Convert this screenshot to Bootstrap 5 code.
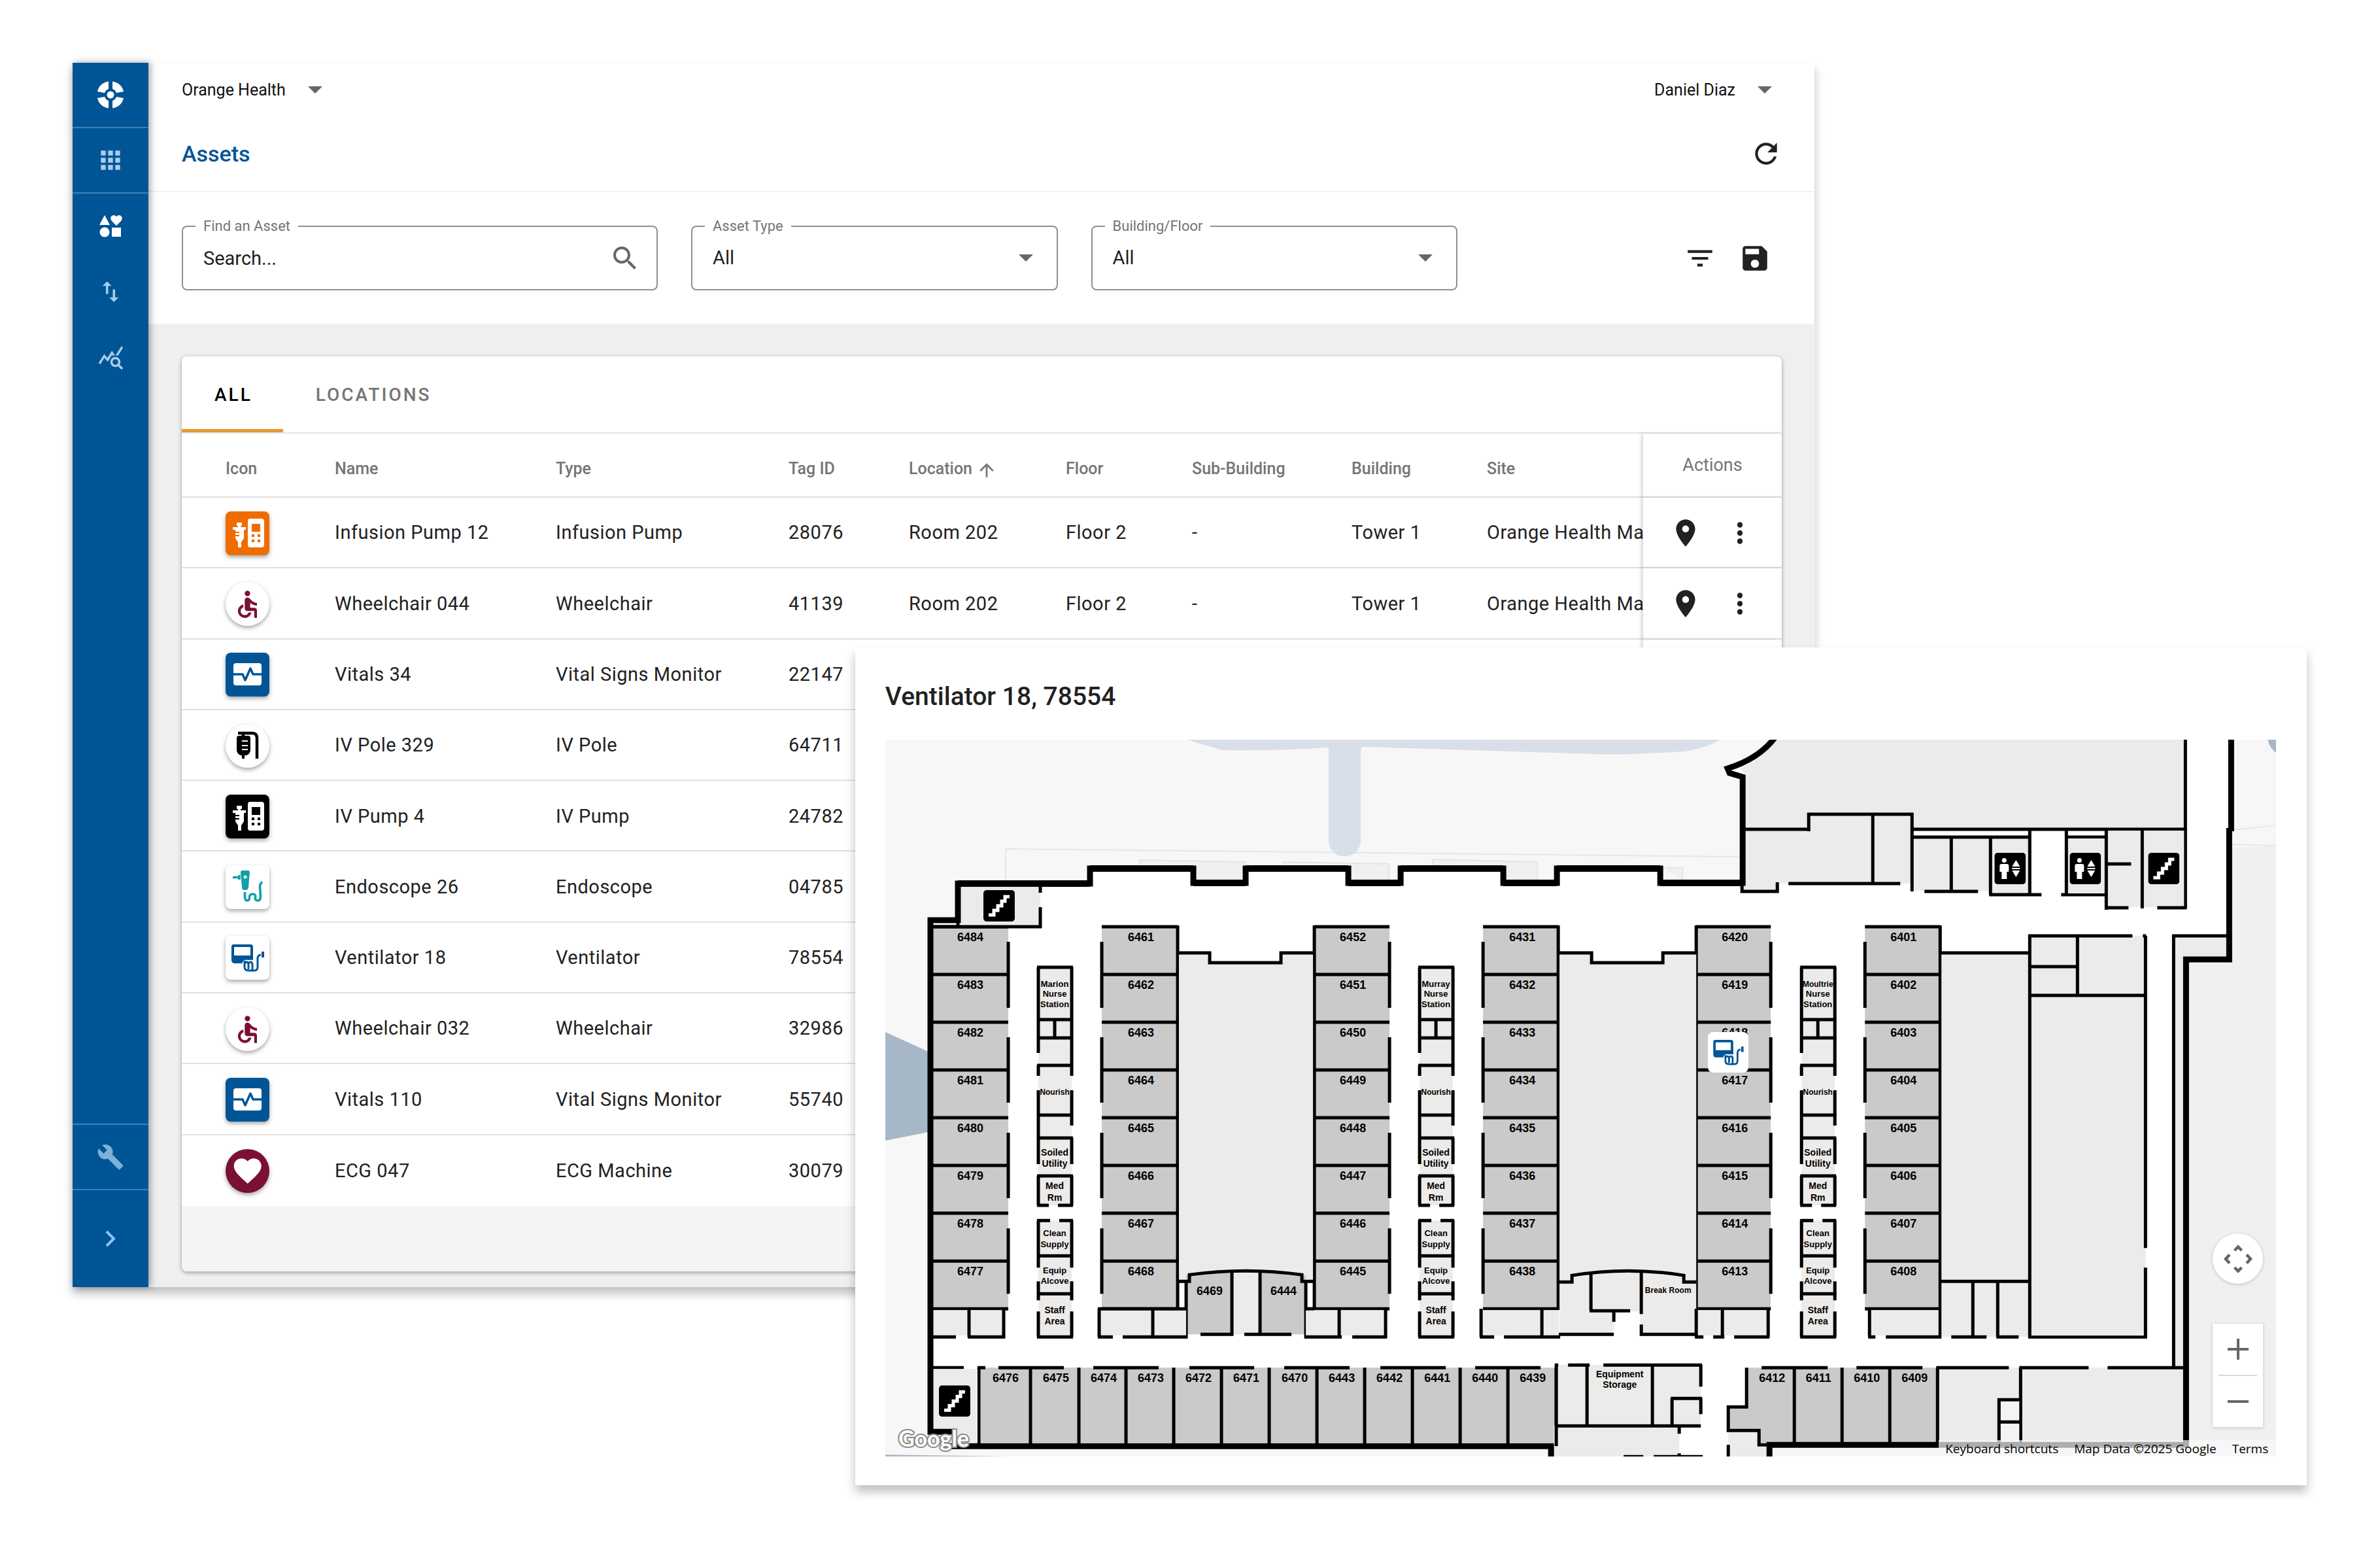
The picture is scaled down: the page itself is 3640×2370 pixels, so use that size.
<!DOCTYPE html>
<html lang="en">
<head>
<meta charset="utf-8">
<meta name="viewport" content="width=device-width, initial-scale=1">
<title>Assets - Orange Health</title>
<link rel="stylesheet" href="https://cdn.jsdelivr.net/npm/bootstrap@5.3.0/dist/css/bootstrap.min.css">
<style>
:root { --brand: #005596; --ink: #212121; --muted: #757575; }
body { font-family: Roboto, "Open Sans", sans-serif; color: var(--ink); background: #fff; }
.stage { min-height: 2370px; padding: 96px 0 0 111px; }
.app-shell { width: 73.19vw; box-shadow: 0 10px 14px rgba(0,0,0,.25); }
.side-rail { width: 116px; background: var(--brand); box-shadow: 3px 0 10px rgba(0,0,0,.35); z-index: 2; }
.rail-link { height: 100px; color: #a9cdea; }
.rail-link.current { color: #fff; }
.rail-link.rail-end { height: 148px; }
.rail-rule { border-bottom: 2px solid #3f81b4; }
.rail-tool { color: #7fb0d8; }
.top-row { height: 82px; padding: 0 66px 0 51px; }
.top-row button, .icon-btn { border: 0; background: none; padding: 0; color: var(--ink); line-height: 1; }
.top-row button { font-size: 25px; color: #111; gap: 34px; }
.title-row { height: 116px; padding: 0 50px 0 51px; border-bottom: 2px solid #f1f1f1; }
.page-title { font-size: 34px; font-weight: 500; color: var(--brand); line-height: 1; }
.filter-row { height: 201px; padding: 0 67px 0 51px; gap: 51px; }
.filter-tools { gap: 34px; }
.outlined { height: 99px; border: 2px solid #8f8f8f; border-radius: 8px; }
.outlined.wide { width: 20vw; }
.outlined.mid { width: 15.4vw; }
.outlined label { position: absolute; top: -13px; left: 19px; padding: 0 12px; background: #fff; font-size: 22px; line-height: 24px; color: var(--muted); }
.outlined input, .outlined select { width: 100%; height: 100%; border: 0; outline: 0; background: transparent; padding: 0 31px; font-size: 29px; color: var(--ink); appearance: none; }
.outlined input::placeholder { color: var(--ink); opacity: 1; }
.outlined svg { position: absolute; top: 0; bottom: 0; margin: auto 0; right: 36px; pointer-events: none; }
.outlined.wide svg { right: 24px; }
.work-area { background: #efefef; padding: 50px 51px 24px; }
.asset-panel { background: #fff; border-radius: 8px; box-shadow: 0 2px 6px rgba(0,0,0,.35); }
.tab-strip { height: 118px; border-bottom: 2px solid #e4e4e4; }
.tab-strip button { border: 0; background: none; padding: 2px 47px 0 50px; font-size: 28px; font-weight: 500; letter-spacing: 3px; color: var(--muted); border-bottom: 5px solid transparent; border-top: 5px solid transparent; }
.tab-strip button.on { color: #000; border-bottom-color: #e9982d; }
.asset-grid { width: 100%; height: 1181px; table-layout: fixed; border-collapse: separate; border-spacing: 0; }
.asset-grid th { height: 98px; padding: 12px 0 0; font-size: 25px; font-weight: 500; color: var(--muted); white-space: nowrap; border-bottom: 2px solid #e0e0e0; }
.asset-grid td { height: 108px; padding: 2px 0 0; font-size: 29px; letter-spacing: .5px; white-space: nowrap; overflow: hidden; border-bottom: 2px solid #e0e0e0; }
.asset-grid tr:last-child td { border-bottom: 0; }
.asset-grid tr > :first-child { padding-left: 67px; }
.asset-grid tr > .act { position: relative; background: #fff; box-shadow: -3px 0 5px rgba(0,0,0,.16); overflow: visible; }
.asset-grid th.act { font-size: 27px; font-weight: 400; text-align: center; padding: 0; }
.act-pair { gap: 33px; }
.tile { width: 67px; height: 67px; border-radius: 8px; box-shadow: 0 3px 6px rgba(0,0,0,.35); display: block; }
.tile.round { border-radius: 50%; }
.panel-foot { height: 100px; background: #f4f4f4; border-radius: 0 0 8px 8px; }
.map-window { position: absolute; top: 990px; left: 35.93vw; width: 61vw; padding: 51px 47px 44px 46px; background: #fff; box-shadow: 0 10px 14px rgba(0,0,0,.25); z-index: 5; }
.map-title { font-size: 39px; line-height: 48px; font-weight: 500; margin: 0 0 42px; }
.plan { display: block; width: 100%; height: auto; font-family: "Liberation Sans", Arial, sans-serif; font-weight: 700; }
.plan .t18 { font-size: 18px; } .plan .t14 { font-size: 14px; } .plan .t13 { font-size: 13px; } .plan .t12 { font-size: 12px; }
.map-tools { position: absolute; right: 20px; bottom: 45px; width: 77px; gap: 61px; }
.map-tools button { border: 0; background: #fff; width: 77px; padding: 0; color: #666; }
.pan-btn { height: 77px; border-radius: 50%; box-shadow: 0 1px 5px rgba(0,0,0,.2); }
.zoom-box { background: #fff; box-shadow: 0 1px 5px rgba(0,0,0,.2); }
.zoom-box button { height: 78px; }
.zoom-box hr { margin: 0 9px; border: 0; border-top: 2px solid #d9d9d9; opacity: 1; height: 0; }
.map-legal { position: absolute; right: 0; bottom: 0; background: rgba(247,247,247,.7); height: 25px; padding: 1px 12px 0 10px; gap: 24px; font-family: "Open Sans", sans-serif; font-size: 19px; line-height: 25px; }
.map-legal a, .map-legal span { color: #000; text-decoration: none; }
.pin { position: absolute; left: 59.15%; top: 40.75%; width: 62px; height: 62px; border: 0; border-radius: 8px; background: #fff; padding: 0; }
</style>
<script src="https://cdn.jsdelivr.net/npm/bootstrap@5.3.0/dist/js/bootstrap.bundle.min.js"></script>
</head>
<body>
<svg width="0" height="0" class="position-absolute" aria-hidden="true">
  <defs>
    <symbol id="i-pump" viewBox="0 0 67 67"><g fill="#fff"><path d="M17 17h8v5h-2v2h8v4h-3v13l-4 6v8h-5v-8l-4-6v-3h6v-2h-6v-3h6v-2h-6v-3h-4v-4h8v-2h-2z"/><path fill-rule="evenodd" d="M37 11h18q4 0 4 4v36q0 4-4 4H37q-3 0-3-4V15q0-4 3-4zM40 19v12h13V19zM40 35v4h4v-4zM49 35v4h4v-4zM40 43v4h4v-4zM49 43v4h4v-4z"/></g></symbol>
    <symbol id="i-chair" viewBox="0 0 67 67"><g transform="translate(8.500 9) scale(2.08)" fill="#7a1033"><circle cx="12" cy="4" r="2"/><path d="M19 13v-2c-1.540.02-3.090-.75-4.070-1.830l-1.290-1.430c-.17-.19-.38-.34-.61-.45-.01 0-.01-.01-.02-.01H13c-.35-.2-.75-.3-1.190-.26C10.760 7.110 10 8.040 10 9.090V15c0 1.100.9 2 2 2h5v5h2v-5.500c0-1.100-.9-2-2-2h-3v-3.450c1.290 1.070 3.250 1.940 5 1.950zm-6.170 5c-.41 1.160-1.520 2-2.830 2-1.660 0-3-1.340-3-3 0-1.310.84-2.410 2-2.830V12.100c-2.280.46-4 2.480-4 4.900 0 2.760 2.240 5 5 5 2.420 0 4.440-1.720 4.900-4h-2.070z"/></g></symbol>
    <symbol id="i-vitals" viewBox="0 0 67 67"><rect x="12" y="16" width="43" height="34" rx="4" fill="#fff"/><path d="M12 33h14l4 9 8-18 4 9h13" fill="none" stroke="#005596" stroke-width="3.500" stroke-linejoin="round"/></symbol>
    <symbol id="i-pole" viewBox="0 0 67 67"><path d="M19 14h22q7 0 7 8v31M27 14v6" fill="none" stroke="#000" stroke-width="4.500"/><path d="M20 18h15q3 0 3 4v18q0 5-6 8h-3v5h-4v-5h-2q-6-3-6-8V22q0-4 3-4z"/><path d="M25 26h9M25 33h9M25 39h9" stroke="#fff" stroke-width="2"/></symbol>
    <symbol id="i-scope" viewBox="0 0 67 67"><path fill="#149fa8" fill-rule="evenodd" d="M26 8h8q3 0 3 3l-2 22q0 5-5 5h-2q-3 0-3-5l-2-22q0-3 3-3zM30 15.500a2.500 2.500 0 1 0 .1 0z"/><path d="M11 18.500h10M21 15v7M29.500 41v7q0 6 4 6 3 0 3-5t5-5 4 5 4 5q4 0 4-7l-1-14q0-6 4-7" fill="none" stroke="#149fa8" stroke-width="3.600"/></symbol>
    <symbol id="i-vent" viewBox="0 0 67 67"><path fill="#005596" fill-rule="evenodd" d="M12 13h26q4 0 4 4v25H13q-4-1-4-5V17q0-4 3-4zM13 17v13h25V17z"/><path d="M29 52V43q0-3 3-3t3 3v8M35 43q0-3 3-3t3 3v9" fill="none" stroke="#fff" stroke-width="7"/><path d="M29 38v9q0 6 6 6h9q5 0 5-6V35q0-6 5-6M29 43q1-3 3-3 3 0 3 4v7M35 43q1-3 3-3 3 0 3 4v9" fill="none" stroke="#005596" stroke-width="3"/><path d="M57 24v9" stroke="#005596" stroke-width="4"/></symbol>
    <symbol id="i-heart" viewBox="0 0 67 67"><path transform="translate(8.500 8) scale(2.100)" fill="#fff" d="M12 21.350l-1.450-1.320C5.400 15.360 2 12.280 2 8.500 2 5.420 4.420 3 7.500 3c1.740 0 3.410.81 4.500 2.090C13.090 3.810 14.760 3 16.500 3 19.580 3 22 5.420 22 8.500c0 3.780-3.400 6.860-8.550 11.540L12 21.350z"/></symbol>
    <symbol id="i-place" viewBox="0 0 24 24"><path d="M12 2C8.130 2 5 5.130 5 9c0 5.250 7 13 7 13s7-7.750 7-13c0-3.870-3.130-7-7-7zm0 9.500c-1.380 0-2.500-1.120-2.500-2.500s1.120-2.500 2.500-2.500 2.500 1.120 2.500 2.500-1.120 2.500-2.500 2.500z"/></symbol>
    <symbol id="i-more" viewBox="0 0 24 24"><circle cx="12" cy="6" r="2"/><circle cx="12" cy="12" r="2"/><circle cx="12" cy="18" r="2"/></symbol>
    <symbol id="i-caret" viewBox="0 0 22 11"><path d="M0 0h22L11 11z" fill="#666"/></symbol>
    <symbol id="i-stairs" viewBox="0 0 48 48"><rect width="48" height="48" rx="5"/><path d="M8 38h8v-7h6v-7h6v-7h5v-7h7" fill="none" stroke="#fff" stroke-width="5"/></symbol>
    <symbol id="i-lift" viewBox="0 0 48 48"><rect width="48" height="48" rx="5"/><g fill="#fff"><circle cx="15" cy="11.500" r="3.500"/><path d="M11 17h8q3 0 3 3v9h-3v11h-8V29H8v-9q0-3 3-3zM27 21l6-10 6 10zM27 27l6 10 6-10z"/><path d="M27 23h12v2H27z"/></g></symbol>
  </defs>
</svg>

<div class="stage position-relative overflow-hidden">
  <div class="app-shell d-flex bg-white">
    <nav class="side-rail d-flex flex-column flex-shrink-0 position-relative" aria-label="Main">
      <a href="#" class="rail-link current rail-rule d-flex align-items-center justify-content-center" aria-label="Home">
        <svg width="42" height="42" viewBox="0 0 42 42" fill="#fff"><circle cx="21" cy="21" r="5.500"/><path d="M18 0.500v11.500q-4 1-6 6L1 16Q4 3 18 .5zM24 .5v11.500q4 1 6 6l11-2Q38 3 24 .5zM18 41.500V30q-4-1-6-6L1 26q3 13 17 15.500zM24 41.500V30q4-1 6-6l11 2q-3 13-17 15.500z"/></svg>
      </a>
      <a href="#" class="rail-link rail-rule d-flex align-items-center justify-content-center" aria-label="Apps">
        <svg width="44" height="44" viewBox="0 0 24 24" fill="currentColor"><path d="M4 8h4V4H4v4zm6 12h4v-4h-4v4zm-6 0h4v-4H4v4zm0-6h4v-4H4v4zm6 0h4v-4h-4v4zm6-10v4h4V4h-4zm-6 4h4V4h-4v4zm6 6h4v-4h-4v4zm0 6h4v-4h-4v4z"/></svg>
      </a>
      <a href="#" class="rail-link current d-flex align-items-center justify-content-center" aria-label="Assets">
        <svg width="36" height="36" viewBox="0 0 36 36" fill="#fff"><path d="M9 1l8 15H1zM27 17l-7-7q-3-4-1-7 4-4 8 0 4-4 8 0 2 3-1 7z"/><circle cx="9" cy="27" r="7.500"/><path d="M20 20h14v14H20z"/></svg>
      </a>
      <a href="#" class="rail-link d-flex align-items-center justify-content-center" aria-label="Transfers">
        <svg width="42" height="42" viewBox="0 0 24 24" fill="currentColor"><path d="M16 17.010V10h-2v7.010h-3L15 21l4-3.990h-3zM9 3L5 6.990h3V14h2V6.990h3L9 3z"/></svg>
      </a>
      <a href="#" class="rail-link d-flex align-items-center justify-content-center" aria-label="Reports">
        <svg width="41" height="41" viewBox="0 0 24 24" fill="currentColor"><path d="M19.880 18.470c.44-.7.700-1.510.700-2.390 0-2.490-2.010-4.500-4.500-4.500s-4.500 2.010-4.500 4.500 2.010 4.500 4.490 4.500c.88 0 1.700-.26 2.390-.7L21.580 23 23 21.580l-3.120-3.110zm-3.800.11c-1.380 0-2.500-1.120-2.500-2.500s1.120-2.500 2.500-2.500 2.500 1.120 2.500 2.500-1.120 2.500-2.500 2.500zM15.720 10.080c-.74.02-1.450.18-2.100.45l-.55-.83-3.800 6.180-3.010-3.520-3.630 5.810L1 17l5-8 3 3.500L13 6l2.720 4.080zm2.590.5c-.64-.28-1.330-.45-2.050-.49L21.380 2 23 3.180l-4.690 7.400z"/></svg>
      </a>
      <span class="flex-grow-1 rail-rule"></span>
      <a href="#" class="rail-link rail-tool rail-rule d-flex align-items-center justify-content-center" aria-label="Settings">
        <svg width="42" height="42" viewBox="0 0 24 24" fill="currentColor"><path d="M22.700 19l-9.100-9.100c.9-2.300.4-5-1.500-6.900-2-2-5-2.400-7.400-1.300L9 6 6 9 1.600 4.700C.4 7.100.9 10.100 2.900 12.100c1.900 1.900 4.600 2.400 6.900 1.500l9.100 9.100c.4.400 1 .4 1.400 0l2.300-2.300c.5-.4.500-1.100.1-1.400z"/></svg>
      </a>
      <a href="#" class="rail-link rail-end d-flex align-items-center justify-content-center" aria-label="Expand">
        <svg width="16" height="26" viewBox="0 0 16 26" fill="none" stroke="#8cc4f5" stroke-width="4"><path d="M2 2l11 11L2 24"/></svg>
      </a>
    </nav>

    <main class="flex-grow-1">
      <header>
        <div class="top-row d-flex align-items-center justify-content-between">
          <button type="button" class="d-flex align-items-center">Orange Health <svg width="22" height="11"><use href="#i-caret"/></svg></button>
          <button type="button" class="d-flex align-items-center">Daniel Diaz <svg width="22" height="11"><use href="#i-caret"/></svg></button>
        </div>
        <div class="title-row d-flex align-items-center justify-content-between">
          <h1 class="page-title m-0">Assets</h1>
          <button type="button" class="icon-btn" aria-label="Refresh"><svg width="50" height="50" viewBox="0 0 24 24" fill="currentColor"><path d="M17.650 6.350C16.200 4.900 14.210 4 12 4c-4.420 0-7.990 3.580-7.990 8s3.570 8 7.990 8c3.730 0 6.840-2.550 7.730-6h-2.080c-.82 2.330-3.040 4-5.650 4-3.310 0-6-2.690-6-6s2.690-6 6-6c1.660 0 3.140.69 4.220 1.780L13 11h7V4l-2.350 2.350z"/></svg></button>
        </div>
      </header>

      <form class="filter-row d-flex align-items-center">
        <div class="outlined wide position-relative">
          <label for="find">Find an Asset</label>
          <input id="find" type="text" placeholder="Search...">
          <svg width="48" height="48" viewBox="0 0 24 24" fill="#666"><path d="M15.500 14h-.79l-.28-.27C15.410 12.590 16 11.110 16 9.500 16 5.910 13.090 3 9.500 3S3 5.910 3 9.500 5.910 16 9.500 16c1.610 0 3.090-.59 4.230-1.570l.27.28v.79l5 4.990L20.490 19l-4.990-5zm-6 0C7.010 14 5 11.990 5 9.500S7.010 5 9.500 5 14 7.010 14 9.500 11.990 14 9.500 14z"/></svg>
        </div>
        <div class="outlined mid position-relative">
          <label for="kind">Asset Type</label>
          <select id="kind"><option>All</option></select>
          <svg width="22" height="11"><use href="#i-caret"/></svg>
        </div>
        <div class="outlined mid position-relative">
          <label for="place">Building/Floor</label>
          <select id="place"><option>All</option></select>
          <svg width="22" height="11"><use href="#i-caret"/></svg>
        </div>
        <div class="filter-tools d-flex ms-auto">
          <button type="button" class="icon-btn" aria-label="Filter"><svg width="50" height="50" viewBox="0 0 24 24" fill="currentColor"><path d="M10 18h4v-2h-4v2zM3 6v2h18V6H3zm3 7h12v-2H6v2z"/></svg></button>
          <button type="button" class="icon-btn" aria-label="Save"><svg width="50" height="50" viewBox="0 0 24 24" fill="currentColor"><path d="M17 3H5c-1.110 0-2 .9-2 2v14c0 1.100.89 2 2 2h14c1.100 0 2-.9 2-2V7l-4-4zm-5 16c-1.660 0-3-1.340-3-3s1.340-3 3-3 3 1.340 3 3-1.340 3-3 3zm3-10H5V5h10v4z"/></svg></button>
        </div>
      </form>

      <div class="work-area">
        <section class="asset-panel">
          <div class="tab-strip d-flex" role="tablist">
            <button type="button" class="on" role="tab" aria-selected="true">ALL</button>
            <button type="button" role="tab" aria-selected="false">LOCATIONS</button>
          </div>
          <table class="asset-grid">
            <colgroup><col width="234"><col width="338"><col width="356"><col width="184"><col width="240"><col width="193"><col width="244"><col width="207"><col width="239"><col width="212"></colgroup>
            <thead><tr><th>Icon</th><th>Name</th><th>Type</th><th>Tag ID</th><th>Location <svg width="32" height="32" viewBox="0 0 24 24" fill="currentColor"><path d="M4 12l1.410 1.410L11 7.830V20h2V7.830l5.580 5.590L20 12l-8-8-8 8z"/></svg></th><th>Floor</th><th>Sub-Building</th><th>Building</th><th>Site</th><th class="act">Actions</th></tr></thead>
            <tbody id="assets"></tbody>
          </table>
          <div class="panel-foot"></div>
        </section>
      </div>
    </main>
  </div>

  <section class="map-window">
    <h2 class="map-title">Ventilator 18, 78554</h2>
    <div class="position-relative">
      <svg class="plan" id="plan" viewBox="1354 1131 2127 1096" role="img" aria-label="Floor plan"></svg>
      <button type="button" class="pin" aria-label="Ventilator 18"><svg width="62" height="62" viewBox="0 0 67 67" class="d-block"><use href="#i-vent"/></svg></button>
      <div class="map-tools d-flex flex-column">
        <button type="button" class="pan-btn" aria-label="Pan"><svg width="46" height="46" viewBox="0 0 46 46" fill="none" stroke="currentColor" stroke-width="4.500"><path d="M17.500 10l5.500-5.500 5.500 5.500M17.500 36l5.500 5.500 5.500-5.500M10 16.500L4 23l6 6.500M36 16.500l6 6.500-6 6.500"/></svg></button>
        <div class="zoom-box">
          <button type="button" aria-label="Zoom in"><svg width="32" height="32" stroke="currentColor" stroke-width="4"><path d="M0 16h32M16 0v32"/></svg></button>
          <hr>
          <button type="button" aria-label="Zoom out"><svg width="32" height="32" stroke="currentColor" stroke-width="4"><path d="M0 16h32"/></svg></button>
        </div>
      </div>
      <div class="map-legal d-flex"><a href="#">Keyboard shortcuts</a><span>Map Data ©2025 Google</span><a href="#">Terms</a></div>
    </div>
  </section>
</div>

<script>
/* asset rows */
const tiles = {
  pump: ['i-pump', '#ef6c00', ''], chair: ['i-chair', '#fff', 'round'], vitals: ['i-vitals', '#005596', ''],
  pole: ['i-pole', '#fff', 'round'], ivpump: ['i-pump', '#000', ''], scope: ['i-scope', '#fff', ''],
  vent: ['i-vent', '#fff', ''], ecg: ['i-heart', '#7a1033', 'round']
};
const rows = [
  ['pump', 'Infusion Pump 12', 'Infusion Pump', '28076', 'Room 202', 'Floor 2', '-', 'Tower 1', 'Orange Health Ma'],
  ['chair', 'Wheelchair 044', 'Wheelchair', '41139', 'Room 202', 'Floor 2', '-', 'Tower 1', 'Orange Health Ma'],
  ['vitals', 'Vitals 34', 'Vital Signs Monitor', '22147'],
  ['pole', 'IV Pole 329', 'IV Pole', '64711'],
  ['ivpump', 'IV Pump 4', 'IV Pump', '24782'],
  ['scope', 'Endoscope 26', 'Endoscope', '04785'],
  ['vent', 'Ventilator 18', 'Ventilator', '78554'],
  ['chair', 'Wheelchair 032', 'Wheelchair', '32986'],
  ['vitals', 'Vitals 110', 'Vital Signs Monitor', '55740'],
  ['ecg', 'ECG 047', 'ECG Machine', '30079']
];
const actions = '<div class="act-pair d-flex justify-content-center">' +
  '<button type="button" class="icon-btn" aria-label="Locate"><svg width="50" height="50" fill="currentColor"><use href="#i-place"/></svg></button>' +
  '<button type="button" class="icon-btn" aria-label="More"><svg width="50" height="50" fill="currentColor"><use href="#i-more"/></svg></button></div>';
document.getElementById('assets').innerHTML = rows.map(r => {
  const [id, bg, cls] = tiles[r[0]];
  const full = r.length > 4;
  return `<tr><td><svg class="tile ${cls}" style="background:${bg}"><use href="#${id}"/></svg></td>` +
    r.slice(1).map(c => `<td>${c}</td>`).join('') + (full ? '' : '<td colspan="5"></td>') +
    `<td class="act">${full ? actions : ''}</td></tr>`;
}).join('');

/* floor plan */
const out = [];
const B = '#ecebe9', G = '#cacaca';
const rect = (x1, y1, x2, y2, f) => out.push(`<rect x="${x1}" y="${y1}" width="${x2 - x1}" height="${y2 - y1}" fill="${f}"/>`);
const path = (d, w, f, s) => out.push(`<path d="${d}" fill="${f || 'none'}" stroke="${s || (w ? '#000' : 'none')}" stroke-width="${w || 0}"/>`);
const text = (x, y, s, c, extra) => out.push(`<text x="${x}" y="${y}" class="${c}" text-anchor="middle" ${extra || ''}>${s}</text>`);
const T = 5;
const H = (y, ...p) => { let d = ''; for (let i = 0; i < p.length; i += 2) d += `M${p[i]} ${y}H${p[i + 1]}`; path(d, T); };
const V = (x, ...p) => { let d = ''; for (let i = 0; i < p.length; i += 2) d += `M${x} ${p[i]}V${p[i + 1]}`; path(d, T); };

/* ground */
rect(1354, 1131, 3481, 2227, '#f7f7f7');
path('M3347 1300L3481 1293V2227H3347z', 0, '#f0f0f0');
path('M3414 1269L3481 1262M3414 1291L3481 1293', 2, null, '#e8e8e8');
rect(3347, 2201, 3481, 2227, '#f7f7f7');
path('M1743 1346V1315L1903 1318V1346M1964 1346V1318L2124 1321V1346M2191 1346V1314L2351 1318V1346M2544 1327H2573V1346', 2, '#f0f0f0', '#e4e4e4');
path('M1538 1346V1298L2659 1310', 2, null, '#e6e6e6');
path('M1815 1131L1869 1147Q1965 1148 2029 1143Q2032 1143 2032 1148V1284C2032 1318 2081 1318 2081 1284V1148Q2081 1142 2086 1142L2440 1153Q2480 1155 2576 1149Q2610 1144 2630 1131z', 0, '#d9dfe9');
path('M1354 1578L1420 1608V1731L1354 1744z', 0, '#a6b7c8');
path('M1354 2224L1550 2227H1354z', 0, '#a6b7c8');
path('M3468 1131H3481V1151Q3470 1143 3468 1131z', 0, '#a6b7c8');

/* shell of the building */
path('M1423 2190V1407H1465V1351H1667V1328H1825V1350H1905V1328H2062V1350H2142V1328H2299V1350H2381V1328H2539V1350H2665V1184L2644 1175Q2690 1160 2714 1131H3412V1270H3409V1467H3343V2209H2706V2227H2372V2211H1454V2190z', 0, '#fff');

/* patient room columns */
const ys = [1417, 1490, 1563, 1636, 1709, 1782, 1855, 1928, 2001];
const doors = [1440, 1541, 1586, 1686, 1732, 1832, 1878, 1978];
[[1427, 1542, 0, 1542, 1484, 6484, -1], [1685, 1801, 1801, 1685, 1745, 6461, 1], [2010, 2125, 2010, 2125, 2069, 6452, -1],
 [2268, 2383, 2383, 2268, 2328, 6431, 1], [2594, 2708, 2594, 2708, 2653, 6420, -1], [2852, 2967, 2967, 2852, 2911, 6401, 1]]
.forEach(([l, r, wall, door, cx, n, step]) => {
  rect(l, 1417, r, 2001, G);
  ys.forEach(y => H(y, l, r));
  if (wall) V(wall, 1415, 2003);
  V(door, ...doors);
  for (let i = 0; i < 8; i++) text(cx, ys[i] + 22, n + step * i, 't18');
});

/* service cores between the columns */
[[0, 'Marion'], [583, 'Murray'], [1167, 'Moultrie']].forEach(([dx, name]) => {
  out.push(`<g transform="translate(${dx} 0)">`);
  rect(1588, 1479, 1639, 1843, B); rect(1588, 1866, 1639, 2044, B);
  H(1479, 1586, 1641); H(1559, 1586, 1641); H(1587, 1586, 1641); H(1629, 1586, 1641);
  H(1705, 1586, 1641); H(1740, 1586, 1641); H(1798, 1586, 1641); H(1843, 1586, 1604, 1618, 1641);
  H(1866, 1586, 1606, 1620, 1641); H(1920, 1586, 1641); H(1978, 1586, 1641); H(2044, 1586, 1641);
  V(1613, 1559, 1587);
  V(1588, 1479, 1610, 1629, 1645, 1667, 1780, 1798, 1843, 1866, 1938, 1959, 1988, 2005, 2044);
  V(1639, 1479, 1645, 1667, 1721, 1740, 1780, 1798, 1843, 1866, 1938, 1959, 1988, 2005, 2044);
  text(1613, 1509, name, name.length > 6 ? 't12' : 't13'); text(1613, 1524, 'Nurse', 't13'); text(1613, 1540, 'Station', 't13');
  text(1613, 1674, 'Nourish', 't12');
  text(1613, 1767, 'Soiled', 't14'); text(1613, 1784, 'Utility', 't14');
  text(1613, 1818, 'Med', 't14'); text(1613, 1836, 'Rm', 't14');
  text(1613, 1890, 'Clean', 't13'); text(1613, 1907, 'Supply', 't13');
  text(1613, 1947, 'Equip', 't13'); text(1613, 1963, 'Alcove', 't13');
  text(1613, 2008, 'Staff', 't14'); text(1613, 2025, 'Area', 't14');
  out.push('</g>');
});

/* first courtyard, rooms 6469 and 6444 */
path('M1803 1457H1848V1472H1957V1457H2008V1958H1991V1948Q1905 1938 1819 1948V1958H1803z', 0, B);
path('M1814 1958V1950Q1850 1944 1884 1944V2040H1814zM1927 1944Q1960 1944 1997 1950V2040H1927z', 0, G);
rect(1884, 1944, 1927, 2040, B);
path('M1802 1457H1850V1472H1959V1457H2010M1802 1959H1819V1949Q1905 1937 1991 1949V1959H2010', T);
V(1814, 1959, 2046); V(1884, 1945, 2042); V(1927, 1945, 2042); V(1997, 1959, 2046);
H(2040, 1836, 1886, 1903, 1975);
text(1850, 1980, '6469', 't18'); text(1963, 1980, '6444', 't18');

/* second courtyard and break room */
path('M2385 1457H2434V1472H2543V1457H2594V2040H2385z', 0, B);
rect(2468, 2005, 2508, 2044, '#fff');
path('M2383 1457H2434V1472H2543V1457H2594M2383 1960H2404V1950Q2490 1936 2575 1950V1960H2594', T);
V(2433, 1946, 2004); H(2004, 2431, 2493); V(2468, 2004, 2021); V(2510, 1945, 2009, 2025, 2042); H(2040, 2382, 2468, 2508, 2596);
text(2551, 1977, 'Break Room', 't12');

/* closets under the columns */
rect(1427, 2003, 1535, 2042, B); V(1482, 2001, 2044); V(1535, 2001, 2046); H(2044, 1427, 1462, 1480, 1537);
rect(1681, 2003, 1814, 2042, B); V(1681, 2001, 2044); V(1763, 2001, 2044); H(2001, 1679, 1814); H(2044, 1679, 1702, 1717, 1816);
rect(1997, 2003, 2119, 2042, B); V(2048, 2001, 2044); V(2119, 2001, 2046); H(2001, 1997, 2010); H(2044, 1995, 2052, 2068, 2121);
rect(2265, 2003, 2384, 2042, B); V(2265, 2001, 2044); V(2358, 2001, 2044); H(2044, 2263, 2285, 2300, 2386);
rect(2594, 2003, 2704, 2042, B); V(2594, 2001, 2044); V(2634, 2001, 2044); V(2704, 2001, 2044); H(2044, 2592, 2605, 2620, 2637, 2652, 2706);
rect(2859, 2003, 2967, 2042, B); V(2859, 2001, 2044); V(2967, 2001, 2044); H(2044, 2857, 2868, 2884, 2969);

/* east wing */
rect(2969, 1457, 3104, 2044, B); H(1457, 2967, 3104); H(1959, 2967, 3104);
V(3017, 1959, 2044); V(3055, 1959, 2044); H(2044, 2984, 3038, 3053, 3087, 3102, 3283);
rect(3104, 1431, 3281, 2042, B); V(3104, 1429, 2046); H(1431, 3102, 3261, 3277, 3282); V(3177, 1431, 1522);
H(1478, 3104, 3177); H(1522, 3104, 3281); V(3281, 1431, 1908, 1938, 2046);
rect(3325, 1433, 3341, 2089, B); rect(3325, 1433, 3406, 1464, B); V(3324, 1429, 2091); H(1431, 3322, 3409);

/* north east rooms */
path('M2669 1186L2662 1174Q2690 1163 2716 1131H3342V1268H2924V1351H2718V1363H2664z', 0, B);
path('M3342 1131V1389', T);
H(1268, 2669, 2768, 2924, 3344); path('M2766 1271V1245H2924V1363', T); V(2864, 1245, 1351);
H(1351, 2735, 2906); path('M2664 1350V1363H2718V1349', T);
rect(2927, 1282, 3102, 1362, B); rect(3046, 1282, 3102, 1366, B); H(1280, 2924, 3104, 3160, 3221);
V(2984, 1280, 1363); V(3044, 1280, 1368); V(3104, 1268, 1368); H(1363, 2943, 3025); H(1368, 3042, 3122, 3152, 3221);
rect(3162, 1282, 3219, 1366, B); V(3160, 1268, 1368); rect(3221, 1270, 3340, 1387, B);
V(3221, 1268, 1391); V(3276, 1268, 1389); H(1321, 3221, 3259); H(1388, 3219, 3255, 3299, 3344);

/* south row */
rect(1497, 2091, 2380, 2206, G);
H(2091, 1427, 1474, 1495, 1507, 1527, 1627, 1672, 1772, 1819, 1918, 1964, 2064, 2111, 2211, 2256, 2356);
[1497, 1576, 1650, 1722, 1795, 1868, 1941, 2014, 2087, 2160, 2233, 2306, 2380].forEach(x => V(x, 2091, 2208));
[[1538, 6476], [1615, 6475], [1688, 6474], [1760, 6473], [1833, 6472], [1906, 6471], [1980, 6470], [2052, 6443], [2125, 6442], [2198, 6441], [2271, 6440], [2344, 6439]]
.forEach(([x, n]) => text(x, 2113, n, 't18'));
rect(1427, 2093, 1495, 2206, B);

/* equipment storage */
rect(2382, 2087, 2601, 2180, B); rect(2376, 2180, 2568, 2227, B);
H(2087, 2378, 2383, 2398, 2431, 2452, 2603); V(2427, 2087, 2180); V(2527, 2087, 2180); V(2601, 2087, 2120, 2138, 2162);
H(2138, 2555, 2603); V(2557, 2138, 2180); H(2180, 2380, 2601); V(2380, 2085, 2211); V(2568, 2180, 2192, 2222, 2227);
H(2227, 2483, 2513, 2529, 2604);
text(2477, 2106, 'Equipment', 't14'); text(2477, 2122, 'Storage', 't14');

/* rooms 6412 to 6409 and the south east rooms */
path('M2671 2091H2963V2206H2690V2187H2643V2151H2671z', 0, G);
path('M2643 2189H2688V2211H2702V2227H2643z', 0, B);
path('M2671 2091V2151H2643V2187H2690V2209H2706', T); V(2643, 2209, 2227);
V(2744, 2091, 2208); V(2817, 2091, 2208); V(2890, 2091, 2208);
rect(2963, 2091, 3339, 2206, B);
H(2091, 2694, 2795, 2839, 2940, 2961, 3072, 3088, 3194, 3223, 3341); V(2963, 2091, 2208); V(3090, 2091, 2206);
rect(3057, 2140, 3088, 2206, '#f4f3f2'); path('M3090 2140H3057V2206M3057 2174H3090', T);
[[2710, 6412], [2781, 6411], [2855, 6410], [2928, 6409]].forEach(([x, n]) => text(x, 2113, n, 't18'));

/* outer walls */
path('M2714 1128Q2690 1160 2642 1175L2645 1182L2665 1188V1350H2539V1328H2381V1350H2299V1328H2142V1350H2062V1328H1905V1350H1825V1328H1667V1351H1465V1407H1423V2189H1456', 9);
path('M1465 1351H1667M1667 1328H1825M1825 1350H1905M1905 1328H2062M2062 1350H2142M2142 1328H2299M2299 1350H2381M2381 1328H2539M2539 1350H2665', 10);
path('M1449 2211H2372V2230M2706 2230V2209H3343V1467H3409V1266M3412 1128V1271', 9);

/* north west stair room */
rect(1470, 1356, 1591, 1415, B); H(1417, 1427, 1593); V(1591, 1354, 1365, 1387, 1419); V(1465, 1407, 1417);

out.push('<use href="#i-stairs" x="1504" y="1361" width="48" height="48"/><use href="#i-stairs" x="1436" y="2118" width="48" height="48"/><use href="#i-stairs" x="3285" y="1304" width="48" height="48"/>');
out.push('<use href="#i-lift" x="3050" y="1304" width="48" height="48"/><use href="#i-lift" x="3165" y="1304" width="48" height="48"/>');
text(1428, 2212, 'Google', '', 'fill="#fff" stroke="#8a8a8a" stroke-width="4" paint-order="stroke" font-family="Lato, sans-serif" font-size="34"');
document.getElementById('plan').innerHTML = out.join('');
</script>
</body>
</html>
